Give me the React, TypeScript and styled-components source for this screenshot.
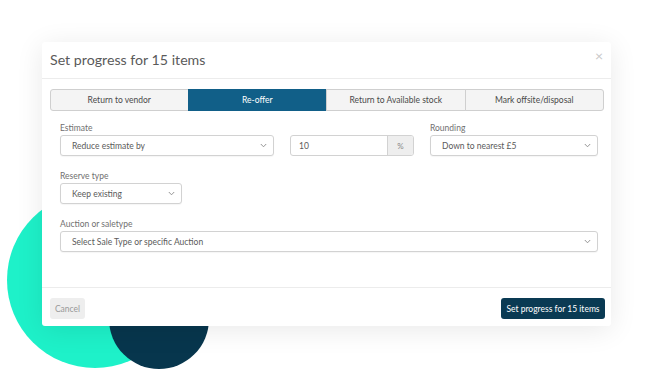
import React from 'react'
import styled, { createGlobalStyle } from 'styled-components'

const GlobalStyle = createGlobalStyle`
  html, body {
    margin: 0;
    padding: 0;
    background: #ffffff;
  }
  body {
    font-family: Lato, "Open Sans", "Liberation Sans", sans-serif;
  }
`

const tabs = ['Return to vendor', 'Re-offer', 'Return to Available stock', 'Mark offsite/disposal']

const Chevron: React.FC = () => (
  <ChevronIcon width="7" height="5" viewBox="0 0 7 5">
    <path d="M0.8 1L3.5 3.8L6.2 1" fill="none" stroke="#8a8a8a" strokeWidth="0.9" />
  </ChevronIcon>
)

const Select: React.FC<{ value: string; width?: string }> = ({ value, width }) => (
  <SelectBox style={width ? { width } : undefined}>
    <span>{value}</span>
    <Chevron />
  </SelectBox>
)

const App: React.FC = () => {
  return (
    <Page>
      <GlobalStyle />
      <TealCircle />
      <NavyCircle />
      <Modal>
        <Header>
          <Title>Set progress for 15 items</Title>
          <Close>×</Close>
        </Header>
        <Body>
          <Tabs>
            {tabs.map((t) => (
              <Tab key={t} active={t === 'Re-offer'}>
                {t}
              </Tab>
            ))}
          </Tabs>
          <Form>
            <TopRow>
              <Field>
                <Label>Estimate</Label>
                <Select value="Reduce estimate by" />
              </Field>
              <Field>
                <Label>&nbsp;</Label>
                <InputGroup>
                  <InputValue>10</InputValue>
                  <Addon>%</Addon>
                </InputGroup>
              </Field>
              <Field>
                <Label>Rounding</Label>
                <Select value="Down to nearest £5" />
              </Field>
            </TopRow>
            <Field>
              <Label>Reserve type</Label>
              <Select value="Keep existing" width="122px" />
            </Field>
            <Field>
              <Label>Auction or saletype</Label>
              <Select value="Select Sale Type or specific Auction" />
            </Field>
          </Form>
        </Body>
        <Footer>
          <CancelButton>Cancel</CancelButton>
          <PrimaryButton>Set progress for 15 items</PrimaryButton>
        </Footer>
      </Modal>
    </Page>
  )
}

const Page = styled.div`
  position: relative;
  width: 655px;
  height: 374px;
  overflow: hidden;
  padding: 42px 0 0 42px;
  box-sizing: border-box;
`
const TealCircle = styled.div`
  position: absolute;
  left: 7px;
  top: 192px;
  width: 176px;
  height: 176px;
  border-radius: 50%;
  background: #1ef1c9;
`
const NavyCircle = styled.div`
  position: absolute;
  left: 109px;
  top: 269px;
  width: 100px;
  height: 100px;
  border-radius: 50%;
  background: #07364d;
`
const Modal = styled.div`
  position: relative;
  width: 569px;
  height: 284px;
  background: #ffffff;
  border-radius: 3px;
  box-shadow: 0 4px 28px rgba(0, 0, 0, 0.09);
  display: flex;
  flex-direction: column;
`
const Header = styled.div`
  height: 36px;
  padding: 0 8px 0 8px;
  display: flex;
  align-items: center;
  justify-content: space-between;
  border-bottom: 1px solid #ececec;
  flex-shrink: 0;
`
const Title = styled.h4`
  margin: 0;
  font-size: 14.2px;
  font-weight: 400;
  color: #5a5a5a;
  margin-top: -1px;
`
const Close = styled.span`
  font-size: 14px;
  color: #c8c8c8;
  line-height: 1;
  margin-top: -9px;
`
const Body = styled.div`
  flex: 1;
  padding: 10px 7px 0 8px;
`
const Tabs = styled.div`
  display: grid;
  grid-template-columns: repeat(4, 1fr);
  height: 22px;
`
const Tab = styled.div<{ active?: boolean }>`
  display: flex;
  align-items: center;
  justify-content: center;
  font-size: 8.5px;
  color: ${(p) => (p.active ? '#ffffff' : '#4a4a4a')};
  background: ${(p) => (p.active ? '#115f88' : '#f4f4f4')};
  border: 1px solid ${(p) => (p.active ? '#115f88' : '#cfcfcf')};
  margin-left: -1px;
  &:first-child {
    margin-left: 0;
    border-radius: 3px 0 0 3px;
  }
  &:last-child {
    border-radius: 0 3px 3px 0;
  }
`
const Form = styled.div`
  padding: 11px 6px 0 10px;
  display: flex;
  flex-direction: column;
  gap: 14px;
`
const TopRow = styled.div`
  display: grid;
  grid-template-columns: 214px 124px 1fr;
  column-gap: 16px;
`
const Field = styled.div`
  display: flex;
  flex-direction: column;
`
const Label = styled.label`
  font-size: 8.5px;
  line-height: 13px;
  color: #707070;
`
const SelectBox = styled.div`
  height: 21px;
  box-sizing: border-box;
  border: 1px solid #d2d2d2;
  border-radius: 3px;
  background: #ffffff;
  display: flex;
  align-items: center;
  justify-content: space-between;
  padding: 0 6px 0 11px;
  font-size: 8.5px;
  color: #5a5a5a;
  box-shadow: 0 1px 1px rgba(0, 0, 0, 0.04);
`
const ChevronIcon = styled.svg`
  flex-shrink: 0;
`
const InputGroup = styled.div`
  height: 21px;
  display: flex;
  box-sizing: border-box;
  border: 1px solid #d2d2d2;
  border-radius: 3px;
  overflow: hidden;
`
const InputValue = styled.div`
  flex: 1;
  display: flex;
  align-items: center;
  padding-left: 8px;
  font-size: 8.5px;
  color: #5a5a5a;
`
const Addon = styled.div`
  width: 25px;
  display: flex;
  align-items: center;
  justify-content: center;
  background: #eeeeee;
  border-left: 1px solid #d2d2d2;
  font-size: 8px;
  color: #888888;
`
const Footer = styled.div`
  border-top: 1px solid #ececec;
  padding: 10px 6px 7px 8px;
  display: flex;
  justify-content: space-between;
  align-items: center;
  flex-shrink: 0;
`
const BaseButton = styled.div`
  height: 21px;
  display: flex;
  align-items: center;
  justify-content: center;
  border-radius: 3px;
  font-size: 8.5px;
`
const CancelButton = styled(BaseButton)`
  width: 35px;
  background: #eeeeee;
  color: #999999;
`
const PrimaryButton = styled(BaseButton)`
  width: 104px;
  background: #0a3a53;
  color: #ffffff;
`

export default App
